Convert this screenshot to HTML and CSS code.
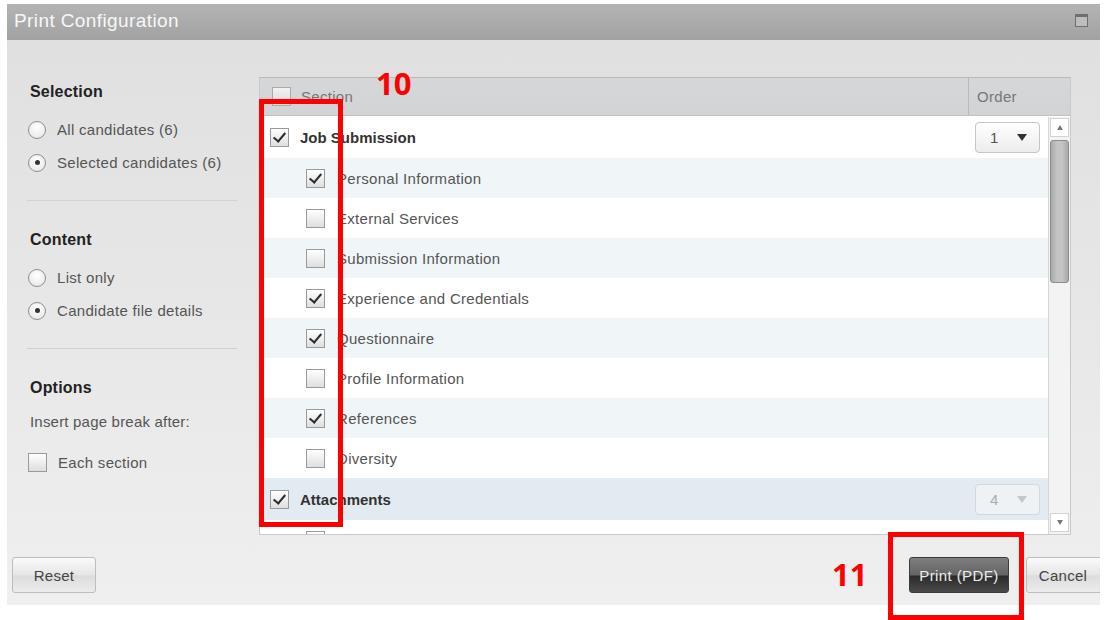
FILE: index.html
```html
<!DOCTYPE html>
<html lang="en">
<head>
<meta charset="utf-8">
<title>Print Configuration</title>
<link rel="stylesheet" href="styles.css">
</head>
<body>
<div class="dialog">
  <div class="titlebar">
    <span class="title">Print Configuration</span>
    <span class="max-icon"></span>
  </div>

  <div class="content">
    <aside class="side">
      <section class="group">
        <h3>Selection</h3>
        <label class="opt"><span class="radio"></span>All candidates (6)</label>
        <label class="opt"><span class="radio on"></span>Selected candidates (6)</label>
      </section>
      <hr class="sep">
      <section class="group">
        <h3>Content</h3>
        <label class="opt"><span class="radio"></span>List only</label>
        <label class="opt"><span class="radio on"></span>Candidate file details</label>
      </section>
      <hr class="sep">
      <section class="group">
        <h3>Options</h3>
        <p class="note">Insert page break after:</p>
        <label class="opt opt-check"><span class="cb"></span>Each section</label>
      </section>
    </aside>

    <div class="grid">
      <div class="grid-head">
        <div class="col-section"><span class="cb"></span><span class="head-label">Section</span></div>
        <div class="col-order">Order</div>
      </div>
      <div class="grid-body">
        <div class="rows">
          <div class="row parent first">
            <span class="cb checked"></span><span class="name">Job Submission</span>
            <span class="select"><span>1</span><span class="caret"></span></span>
          </div>
          <div class="row child alt"><span class="cb checked"></span><span class="name">Personal Information</span></div>
          <div class="row child"><span class="cb"></span><span class="name">External Services</span></div>
          <div class="row child alt"><span class="cb"></span><span class="name">Submission Information</span></div>
          <div class="row child"><span class="cb checked"></span><span class="name">Experience and Credentials</span></div>
          <div class="row child alt"><span class="cb checked"></span><span class="name">Questionnaire</span></div>
          <div class="row child"><span class="cb"></span><span class="name">Profile Information</span></div>
          <div class="row child alt"><span class="cb checked"></span><span class="name">References</span></div>
          <div class="row child"><span class="cb"></span><span class="name">Diversity</span></div>
          <div class="row parent sel">
            <span class="cb checked"></span><span class="name">Attachments</span>
            <span class="select disabled"><span>4</span><span class="caret"></span></span>
          </div>
          <div class="row child"><span class="cb checked"></span></div>
        </div>
        <div class="scrollbar">
          <span class="sb-btn up"></span>
          <span class="sb-thumb"></span>
          <span class="sb-track"></span>
          <span class="sb-btn down"></span>
        </div>
      </div>
    </div>
  </div>

  <div class="footer">
    <button class="btn">Reset</button>
    <div class="footer-right">
      <button class="btn btn-dark">Print (PDF)</button>
      <button class="btn btn-cancel">Cancel</button>
    </div>
  </div>
</div>

<!-- callout markers -->
<div class="mark mark-box mark-10"></div>
<div class="mark mark-num num-10">10</div>
<div class="mark mark-box mark-11"></div>
<div class="mark mark-num num-11">11</div>
</body>
</html>
```

FILE: styles.css
```css
* { box-sizing: border-box; }

html, body {
  margin: 0;
  background: #ffffff;
  width: 1109px;
  height: 620px;
  overflow: hidden;
  font-family: "Liberation Sans", Arial, sans-serif;
  position: relative;
}

.dialog {
  margin: 4px 0 0 7px;
  width: 1093px;
  height: 601px;
  display: flex;
  flex-direction: column;
  overflow: hidden;
  background: linear-gradient(#dfdfdf, #efefef);
}

/* title bar */
.titlebar {
  height: 36px;
  flex: none;
  display: flex;
  align-items: center;
  justify-content: space-between;
  padding: 0 12px 0 7px;
  background: linear-gradient(#b4b4b4, #a2a2a2);
}
.title {
  color: #f7f7f7;
  font-size: 19px;
  letter-spacing: 0.4px;
  margin-top: -2px;
}
.max-icon {
  width: 13px;
  height: 13px;
  border: 1px solid #6f6f6f;
  border-top-width: 3px;
  background: #bdbdbd;
  margin-top: -4px;
}

/* main area */
.content {
  flex: 1;
  display: flex;
  padding-top: 37px;
  min-height: 0;
}

.side {
  width: 252px;
  flex: none;
  padding: 3px 0 0 20px;
}
.group h3 {
  margin: 0;
  height: 24px;
  line-height: 24px;
  font-size: 16px;
  font-weight: bold;
  color: #222;
  padding-left: 3px;
  letter-spacing: 0.2px;
}
.group h3 + .opt { margin-top: 9px; }
.opt {
  display: flex;
  align-items: center;
  height: 33px;
  font-size: 15px;
  letter-spacing: 0.3px;
  color: #555;
  padding-left: 1px;
}
.radio {
  width: 18px;
  height: 18px;
  border-radius: 50%;
  border: 1px solid #8f8f8f;
  background: radial-gradient(circle at 50% 35%, #ffffff, #e4e4e4);
  margin-right: 11px;
  display: inline-flex;
  align-items: center;
  justify-content: center;
  flex: none;
}
.radio.on::after {
  content: "";
  width: 5px;
  height: 5px;
  border-radius: 50%;
  background: #333;
}
.sep {
  border: 0;
  border-top: 1px solid #cfd3d3;
  margin: 21px 22px 27px 0;
  width: 210px;
}
.note {
  margin: 10px 0 0 3px;
  height: 24px;
  line-height: 24px;
  font-size: 15px;
  letter-spacing: 0.2px;
  color: #555;
}
.opt-check { margin-top: 11px; height: 34px; }
.opt-check .cb { margin-right: 11px; }

/* checkbox */
.cb {
  width: 19px;
  height: 19px;
  border: 1px solid #9a9a9a;
  background: linear-gradient(#ffffff, #dedede);
  flex: none;
  display: inline-block;
  position: relative;
}
.cb.checked::after {
  content: "";
  position: absolute;
  left: 5px;
  top: 1px;
  width: 5px;
  height: 10px;
  border-right: 2.5px solid #2a2a2a;
  border-bottom: 2.5px solid #2a2a2a;
  transform: rotate(40deg);
}

/* section grid */
.grid {
  width: 812px;
  height: 458px;
  flex: none;
  display: flex;
  flex-direction: column;
  border: 1px solid #c9c9c9;
  border-top-color: #b9b9b9;
  background: #fff;
}
.grid-head {
  height: 38px;
  flex: none;
  display: flex;
  background: linear-gradient(#d6d7d8, #d2d3d4);
  border-bottom: 1px solid #c2c2c2;
  font-size: 15px;
  letter-spacing: 0.3px;
  color: #777;
}
.col-section {
  flex: 1;
  display: flex;
  align-items: center;
  padding-left: 12px;
}
.col-section .cb { margin-right: 10px; opacity: 0.7; }
.col-order {
  width: 102px;
  border-left: 1px solid #b9b9b9;
  padding-left: 8px;
  display: flex;
  align-items: center;
}
.grid-body {
  flex: 1;
  display: flex;
  min-height: 0;
  overflow: hidden;
  padding-top: 1px;
}
.rows { flex: 1; }
.row {
  height: 40px;
  display: flex;
  align-items: center;
  font-size: 15px;
  letter-spacing: 0.3px;
  color: #555;
  background: #fff;
}
.row.first { height: 41px; }
.row.alt { background: #f0f5f8; }
.row.sel { background: #e2ebf1; height: 42px; }
.row.parent { padding-left: 10px; }
.row.parent .name { font-weight: bold; color: #333; margin-left: 11px; flex: 1; letter-spacing: 0; }
.row.child { padding-left: 46px; }
.row.child .name { margin-left: 12px; }

.select {
  width: 65px;
  height: 31px;
  margin-right: 8px;
  border: 1px solid #c6c6c6;
  border-radius: 4px;
  background: linear-gradient(#ffffff, #ececec);
  display: flex;
  align-items: center;
  justify-content: space-between;
  padding: 0 12px 0 14px;
  color: #555;
  font-size: 15px;
}
.caret {
  width: 0;
  height: 0;
  border-left: 5px solid transparent;
  border-right: 5px solid transparent;
  border-top: 7px solid #333;
}
.select.disabled {
  background: #eef2f5;
  border-color: #d4d8db;
  color: #aaa;
}
.select.disabled .caret { border-top-color: #c6c6c6; }

/* scrollbar */
.scrollbar {
  width: 22px;
  flex: none;
  display: flex;
  flex-direction: column;
  background: #f3f3f3;
  border-left: 1px solid #d6d6d6;
  padding: 1px 1px 2px;
}
.sb-btn {
  height: 19px;
  flex: none;
  background: #fff;
  border: 1px solid #d3d3d3;
  display: flex;
  justify-content: center;
  align-items: center;
}
.sb-btn::after {
  content: "";
  border-left: 3px solid transparent;
  border-right: 3px solid transparent;
}
.sb-btn.up::after { border-bottom: 5px solid #777; }
.sb-btn.down::after { border-top: 5px solid #777; }
.sb-thumb {
  height: 143px;
  flex: none;
  margin: 3px 0 0;
  border: 1px solid #8c8c8c;
  border-radius: 3px;
  background: linear-gradient(90deg, #a9a9a9, #c4c4c4 35%, #c4c4c4 65%, #a9a9a9);
}
.sb-track { flex: 1; }

/* footer */
.footer {
  height: 70px;
  flex: none;
  display: flex;
  justify-content: space-between;
  align-items: flex-start;
  padding: 22px 0 0 5px;
}
.footer-right { display: flex; gap: 17px; margin-right: -10px; }
.btn {
  height: 36px;
  width: 84px;
  border: 1px solid #bdbdbd;
  border-radius: 3px;
  background: linear-gradient(#fafafa, #e6e6e6 50%, #dcdcdc 52%, #ececec);
  font-family: "Liberation Sans", Arial, sans-serif;
  font-size: 15px;
  letter-spacing: 0.3px;
  color: #444;
  padding: 0;
}
.btn-dark {
  width: 100px;
  border-color: #3c3c3c;
  background: linear-gradient(#7e7e7e, #646464 50%, #2a2a2a 53%, #4a4a4a);
  color: #ececec;
  letter-spacing: 0.4px;
}
.btn-cancel { width: 84px; padding-right: 10px; }

/* callouts */
.mark { position: absolute; }
.mark-box { border: 5px solid #ff0000; }
.mark-10 { left: 259px; top: 99px; width: 84px; height: 428px; }
.mark-11 { left: 888px; top: 532px; width: 136px; height: 88px; }
.mark-num {
  color: #ff0000;
  font-weight: bold;
  font-size: 31px;
  font-family: "Open Sans", "Liberation Sans", sans-serif;
  line-height: 1;
}
.num-10 { left: 376px; top: 68px; }
.num-11 { left: 832px; top: 559px; }
```
